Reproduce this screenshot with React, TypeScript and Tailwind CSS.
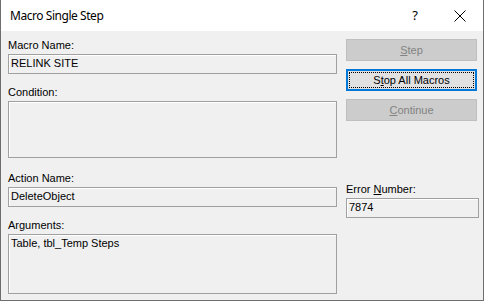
import React from "react";

const Label = ({ children, className = "" }: { children: React.ReactNode; className?: string }) => (
  <div className={`h-[13px] leading-[13px] text-[11px] text-black ${className}`}>{children}</div>
);

const Box = ({ h, children }: { h: string; children?: React.ReactNode }) => (
  <div className={`mt-[2px] ${h} border border-[#a0a0a0] bg-[#f0f0f0] shadow-[inset_1px_1px_0_#ffffff] px-[2px] text-[11px] leading-[13px] text-black`}>
    {children}
  </div>
);

export default function App() {
  return (
    <div
      className="w-[484px] h-[301px] flex flex-col border-l border-r border-b border-[#6e6e6e] bg-[#f0f0f0] overflow-hidden"
      style={{ fontFamily: '"Liberation Sans", Arial, sans-serif' }}
    >
      <div className="h-[31px] shrink-0 bg-white flex items-center">
        <div
          className="pl-[9px] text-[12px] tracking-[-0.45px] text-black flex-1"
          style={{ fontFamily: '"Noto Sans", "Open Sans", sans-serif' }}
        >
          Macro Single Step
        </div>
        <div
          className="w-[14px] mr-[32px] text-[13px] text-black text-center"
          style={{ fontFamily: '"Noto Sans", sans-serif' }}
        >
          ?
        </div>
        <svg width="12" height="12" viewBox="0 0 12 12" className="mr-[17px]">
          <path d="M0.5 0.5 L11.5 11.5 M11.5 0.5 L0.5 11.5" stroke="#000" strokeWidth="1" fill="none" />
        </svg>
      </div>
      <div className="flex flex-1 pl-[7px] pt-[8px]">
        <div className="w-[329px] flex flex-col">
          <Label>Macro Name:</Label>
          <Box h="h-[20px]">
            <div className="pt-[2px]">RELINK SITE</div>
          </Box>
          <Label className="mt-[12px]">Condition:</Label>
          <Box h="h-[57px]" />
          <Label className="mt-[14px]">Action Name:</Label>
          <Box h="h-[20px]">
            <div className="pt-[2px]">DeleteObject</div>
          </Box>
          <Label className="mt-[12px]">Arguments:</Label>
          <Box h="h-[60px]">
            <div className="pt-[2px]">Table, tbl_Temp Steps</div>
          </Box>
        </div>
        <div className="ml-[9px] w-[133px] flex flex-col">
          <button className="w-[131px] h-[22px] bg-[#cccccc] border border-[#bfbfbf] text-[11px] text-[#838383]">
            <span className="underline">S</span>tep
          </button>
          <button className="relative mt-[8px] w-[131px] h-[22px] bg-[#e1e1e1] border-2 border-[#0078d7] text-[11px] text-black">
            <span className="absolute inset-[1px] border border-dotted border-black" />
            S<span className="underline">t</span>op All Macros
          </button>
          <button className="mt-[8px] w-[131px] h-[22px] bg-[#cccccc] border border-[#bfbfbf] text-[11px] text-[#838383]">
            <span className="underline">C</span>ontinue
          </button>
          <Label className="mt-[62px]">
            Error <span className="underline">N</span>umber:
          </Label>
          <Box h="h-[20px]">
            <div className="pt-[2px]">7874</div>
          </Box>
        </div>
      </div>
    </div>
  );
}
